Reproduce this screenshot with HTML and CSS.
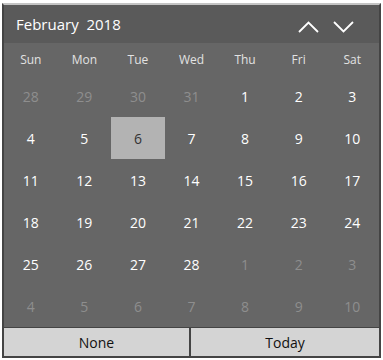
FILE: index.html
```html
<!DOCTYPE html>
<html lang="en">
<head>
    <meta charset="UTF-8">
    <title>Date picker</title>
    <link rel="stylesheet" href="styles.css">
</head>
<body>
    <div class="picker">
        <div class="head">
            <span class="title">February&nbsp; 2018</span>
            <div class="nav">
                <svg width="21" height="12" viewBox="0 0 21 12"><path d="M1 11 L10.5 1.5 L20 11" fill="none" stroke="#fff" stroke-width="1.8"/></svg>
                <svg width="21" height="12" viewBox="0 0 21 12"><path d="M1 1 L10.5 10.5 L20 1" fill="none" stroke="#fff" stroke-width="1.8"/></svg>
            </div>
        </div>
        <div class="week">
            <span>Sun</span><span>Mon</span><span>Tue</span><span>Wed</span><span>Thu</span><span>Fri</span><span>Sat</span>
        </div>
        <div class="days">
            <span class="out">28</span><span class="out">29</span><span class="out">30</span><span class="out">31</span><span>1</span><span>2</span><span>3</span>
            <span>4</span><span>5</span><span class="sel">6</span><span>7</span><span>8</span><span>9</span><span>10</span>
            <span>11</span><span>12</span><span>13</span><span>14</span><span>15</span><span>16</span><span>17</span>
            <span>18</span><span>19</span><span>20</span><span>21</span><span>22</span><span>23</span><span>24</span>
            <span>25</span><span>26</span><span>27</span><span>28</span><span class="out">1</span><span class="out">2</span><span class="out">3</span>
            <span class="out">4</span><span class="out">5</span><span class="out">6</span><span class="out">7</span><span class="out">8</span><span class="out">9</span><span class="out">10</span>
        </div>
        <div class="foot">
            <button class="none">None</button>
            <button>Today</button>
        </div>
    </div>
</body>
</html>
```

FILE: styles.css
```css
body { margin: 0; padding: 3px 2px; background: #fff; font-family: "Open Sans", "Noto Sans", sans-serif; }
.picker { width: 375px; border: 2px solid #444; border-top: 2px solid #c4c4c4; background: #666; }
.head { height: 38px; background: #5a5a5a; display: flex; align-items: center; justify-content: space-between; padding: 0 25px 0 12px; }
.title { color: #fff; font-size: 15px; }
.nav { display: flex; gap: 14px; margin-top: 5px; }
.nav svg { display: block; }
.week { height: 32px; display: grid; grid-template-columns: repeat(7, 1fr); align-items: center; }
.week span { text-align: center; color: #e2e2e2; font-size: 12px; }
.days { display: grid; grid-template-columns: repeat(7, 1fr); grid-auto-rows: 42px; }
.days span { display: flex; align-items: center; justify-content: center; color: #fff; font-size: 14px; }
.days .out { color: #8e8e8e; }
.days .sel { background: #b3b3b3; color: #333; }
.foot { display: flex; border-top: 1px solid #444; }
.foot button { flex: 1; height: 28px; border: 0; background: #d4d4d4; font-family: inherit; font-size: 14px; color: #111; padding: 0; }
.foot .none { flex: 0 0 185px; }
.foot button + button { border-left: 2px solid #444; }
```
